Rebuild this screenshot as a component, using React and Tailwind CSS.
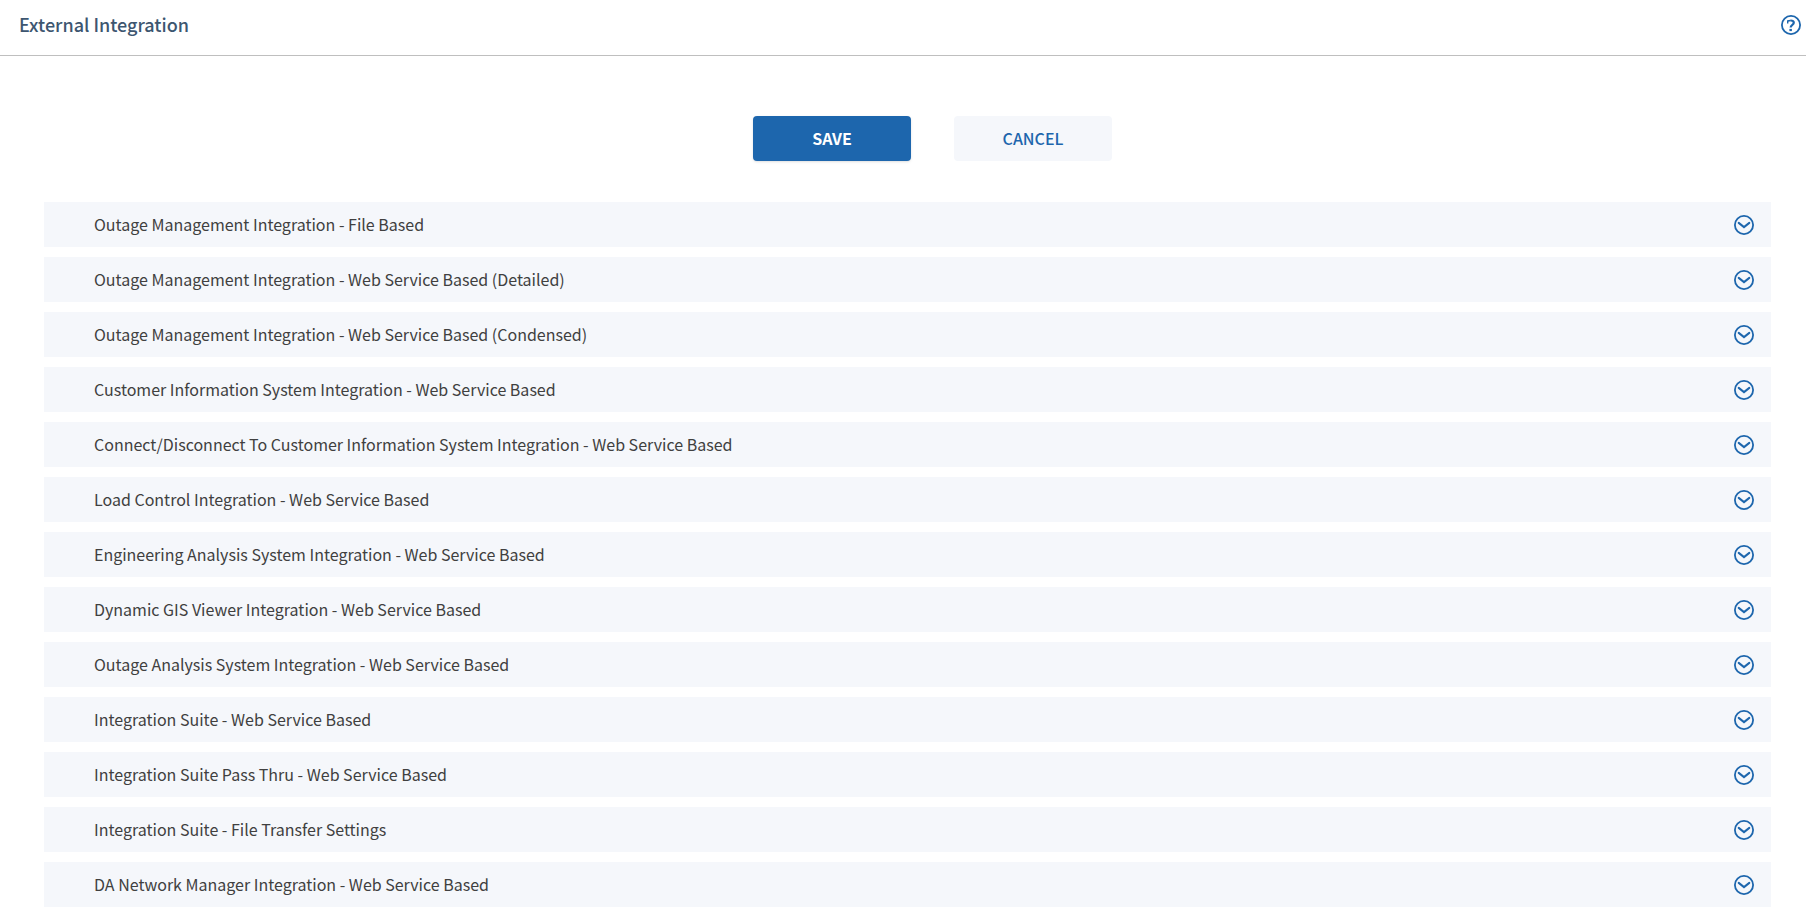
import { useState } from "react";

const SECTIONS = [
  "Outage Management Integration - File Based",
  "Outage Management Integration - Web Service Based (Detailed)",
  "Outage Management Integration - Web Service Based (Condensed)",
  "Customer Information System Integration - Web Service Based",
  "Connect/Disconnect To Customer Information System Integration - Web Service Based",
  "Load Control Integration - Web Service Based",
  "Engineering Analysis System Integration - Web Service Based",
  "Dynamic GIS Viewer Integration - Web Service Based",
  "Outage Analysis System Integration - Web Service Based",
  "Integration Suite - Web Service Based",
  "Integration Suite Pass Thru - Web Service Based",
  "Integration Suite - File Transfer Settings",
  "DA Network Manager Integration - Web Service Based",
];

function ChevronCircle({ open }) {
  return (
    <svg
      aria-hidden="true"
      viewBox="0 0 20 20"
      className={open ? "size-5 shrink-0 rotate-180" : "size-5 shrink-0"}
      fill="none"
      stroke="#1d66ad"
    >
      <circle cx="10" cy="10" r="9.1" strokeWidth="1.8" />
      <path d="M4.700 7.900 10 12.100 15.300 7.900" strokeWidth="2" strokeLinecap="round" />
    </svg>
  );
}

function HelpIcon() {
  return (
    <svg aria-hidden="true" viewBox="0 0 20 20" className="size-5" fill="none" stroke="#1d66ad">
      <circle cx="10" cy="10" r="9.1" strokeWidth="1.8" />
      <path d="M6.700 8.400V5.500" strokeWidth="1.4" />
      <path d="M6.500 6C7.600 5.600 8.700 5.500 9.800 5.500" strokeWidth="1.500" />
      <path d="M9.600 5.500c2.200 0 3.200.8 3.200 2.300 0 2.200-3.100 1.900-3.200 4.700" strokeWidth="2.200" />
      <path d="M8.400 15h2.500" strokeWidth="2.200" />
    </svg>
  );
}

function Section({ title }) {
  const [open, setOpen] = useState(false);
  return (
    <li>
      <button
        type="button"
        aria-expanded={open}
        onClick={() => setOpen(!open)}
        className="flex w-full items-center justify-between bg-[#f5f7fb] py-[10px] pr-[17px] pl-[50px] text-left text-base leading-[25px] text-[#404040]"
      >
        <span>{title}</span>
        <ChevronCircle open={open} />
      </button>
    </li>
  );
}

export default function App() {
  return (
    <div className="bg-white font-['Noto_Sans_CJK_SC',sans-serif]">
      <header className="flex items-start justify-between border-b border-[#bfbfbf] pr-[5px] pb-[17px] pl-[19px]">
        <h1 className="pt-[10px] text-lg leading-7 font-medium text-[#3d5670]">External Integration</h1>
        <button type="button" aria-label="Help" className="pt-[15px]">
          <HelpIcon />
        </button>
      </header>
      <main className="pt-[60px] pr-[35px] pb-[14px] pl-[44px]">
        <div className="flex justify-center gap-[43px] pl-[50px]">
          <button type="button" className="h-[45px] w-[158px] rounded bg-[#1d66ad] pb-[2px] text-base font-bold text-white shadow-sm">
            SAVE
          </button>
          <button type="button" className="h-[45px] w-[158px] rounded bg-[#f5f7fb] pb-[2px] text-base font-medium text-[#1d66ad]">
            CANCEL
          </button>
        </div>
        <ul className="mt-[41px] flex flex-col gap-[10px]">
          {SECTIONS.map((title) => (
            <Section key={title} title={title} />
          ))}
        </ul>
      </main>
    </div>
  );
}
